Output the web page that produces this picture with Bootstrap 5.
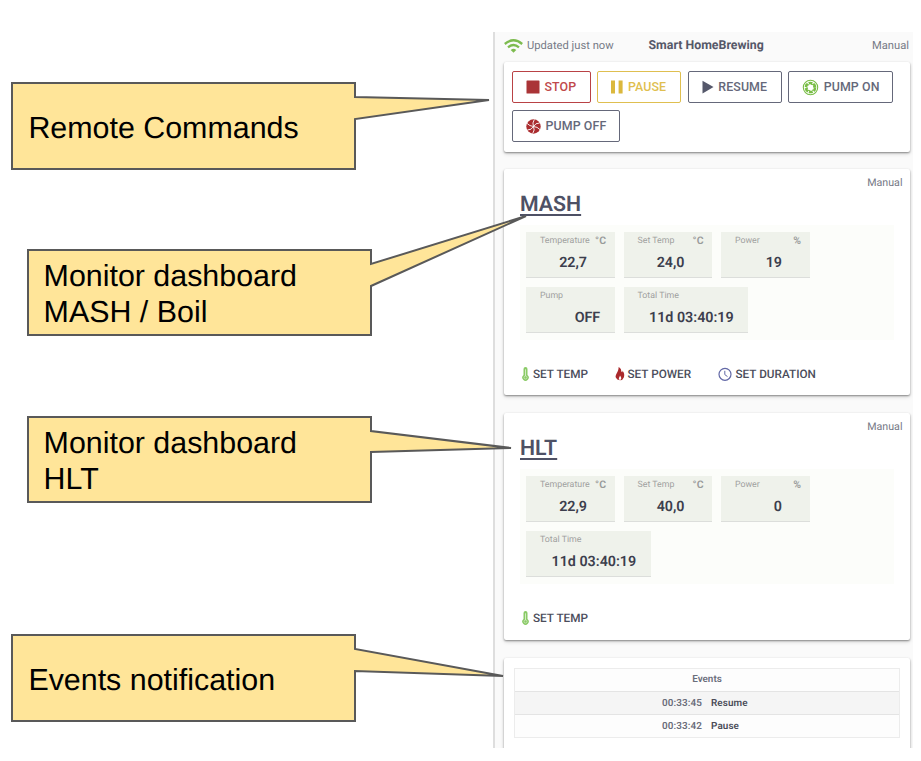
<!DOCTYPE html>
<html lang="en">
<head>
<meta charset="utf-8">
<meta name="viewport" content="width=device-width, initial-scale=1">
<title>Smart HomeBrewing</title>
<link href="https://cdn.jsdelivr.net/npm/bootstrap@5.3.0/dist/css/bootstrap.min.css" rel="stylesheet">
<style>
body{width:921px;height:761px;overflow:hidden;background:#fff;font-family:Roboto,"Liberation Sans",sans-serif;color:#555869;text-rendering:geometricPrecision}
svg{display:block;flex:none}
.notes{width:493px;padding-top:82px}
.callout{position:relative;z-index:2;width:345px;height:88px;margin-left:11px;padding-left:17.4px;font:30.4px/36px "Liberation Sans",Arial,sans-serif;color:#000}
.callout svg{position:absolute;left:0;top:0;overflow:visible;z-index:-1;fill:#ffe599;stroke:#595959;stroke-width:2}
.callout span{padding-top:2px}
.callout .one-line{padding-top:4px}
.callout-in{margin-left:27px;height:87px;padding-left:16.6px}
.gap-a{margin-top:79px}.gap-b{margin-top:80px}.gap-c{margin-top:131px}
.phone{width:420px;height:716px;margin-top:32px;padding:0 3px 0 9px;background:#fafafa;border-left:2px solid #dedede;overflow:hidden}
.topbar{height:30px;font-size:11.2px;line-height:28px;color:#777a87;padding:0 1px 0 0}
.topbar strong{font-size:12.35px;line-height:28px;color:#555869;font-weight:700}
.side-cell{width:144.5px;height:28px}
.panel-card{background:#fff;border-radius:2px;box-shadow:0 1px 2px rgba(0,0,0,.4),0 2px 4px rgba(0,0,0,.13);width:406px}
.commands{height:90px;padding:9px 8px;gap:7px 6.4px;align-content:flex-start}
.cmd{--bs-btn-font-size:12.4px;--bs-btn-line-height:16px;--bs-btn-font-weight:500;--bs-btn-border-radius:2px;--bs-btn-padding-x:13px;--bs-btn-padding-y:0;--bs-btn-color:#65687a;--bs-btn-border-color:#65687a;height:32px;gap:4.5px;white-space:nowrap;letter-spacing:.1px}
.cmd-stop{--bs-btn-color:#c0494b;--bs-btn-border-color:#b94245;width:79px}
.cmd-pause{--bs-btn-color:#dfbf50;--bs-btn-border-color:#dfbf50;width:84px}
.cmd-resume{width:94px}.cmd-on{width:105px}.cmd-off{width:108px}
.vessel{height:226px;margin-top:17px;padding:7px 16px 0}
.vessel.second{margin-top:18px;height:227px}
.mode{font-size:10.7px;line-height:14px;color:#777a87;margin-right:-8.5px}
.vessel h2{font-size:21.3px;line-height:28px;font-weight:600;color:#4e5165;text-decoration:underline;text-decoration-thickness:1.5px;text-underline-offset:2.5px;margin:1px 0 6px}
.tiles{background:#fcfdfa;width:374px;height:115px;padding:7px 6px;gap:9px;align-content:flex-start}
.tile{width:88.5px;height:46px;background:#eff2eb;border-bottom:1px solid #dcdedb;padding:2px 8.5px 0 14px}
.tile.wide{width:124.5px}
.tile-head{font-size:8.8px;line-height:14px;color:#9fa19f;height:15px}
.tile-head b{font-size:10.5px;line-height:13px;font-weight:600;color:#989a9a}
.tile-value{font-size:14.3px;line-height:28px;font-weight:600;color:#3c3e4d;text-align:right;padding-right:5.8px}
.tile-value.mid{padding-right:19px}
.actions{height:20px;margin-top:24px;font-size:11.75px;font-weight:500;line-height:20px;color:#4b4d5b}
.actions span{display:flex;align-items:center;white-space:nowrap}
.act-temp{width:93.5px}.act-power{width:104px}
.events{height:100px;margin-top:18px;padding:10px 11px 0 10px}
.log{width:386px;border:1px solid #ececec;font-size:9.9px;font-weight:600;line-height:22px;color:#6b6e7b;background:#fdfdfd}
.log-row{height:23px;border-top:1px solid #e4e4e4;line-height:24px}
.log-row.alt{background:#f5f5f5}
.log-row time{width:187px;text-align:right;letter-spacing:.1px}
.log-row b{font-weight:600;color:#4a4c58;margin-left:9px;letter-spacing:.1px}
</style>
</head>
<body class="d-flex">
<section class="notes flex-shrink-0">
  <div class="callout d-flex align-items-center"><svg width="345" height="88"><path d="M1 1H344V15L478 18L344 37V87H1Z"/></svg><span class="one-line">Remote Commands</span></div>
  <div class="callout callout-in gap-a d-flex align-items-center"><svg width="345" height="87"><path d="M1 1H344V15L499-33L344 37V86H1Z"/></svg><span>Monitor dashboard<br>MASH / Boil</span></div>
  <div class="callout callout-in gap-b d-flex align-items-center"><svg width="345" height="87"><path d="M1 1H344V15L484 32L344 36V86H1Z"/></svg><span>Monitor dashboard<br>HLT</span></div>
  <div class="callout gap-c d-flex align-items-center"><svg width="345" height="88"><path d="M1 1H344V15L492 42L344 37V87H1Z"/></svg><span class="one-line">Events notification</span></div>
</section>

<main class="phone flex-shrink-0">
  <header class="topbar d-flex">
    <div class="side-cell d-flex align-items-center"><svg class="me-1" width="19" height="14" viewBox="0 0 19 14" fill="none" stroke="#7dbb4f" stroke-width="2.3"><path d="M.8 5Q9.5-2.4 18.2 5M4 8.3Q9.5 3.8 15 8.3"/><path d="M6.7 11Q9.5 8.7 12.3 11L9.5 13.8Z" fill="#7dbb4f" stroke="none"/></svg>Updated just now</div>
    <strong>Smart HomeBrewing</strong>
    <span class="ms-auto">Manual</span>
  </header>

  <section class="panel-card commands d-flex flex-wrap">
    <button class="btn cmd cmd-stop d-flex align-items-center"><svg width="14" height="14" viewBox="0 0 14 14"><rect x=".5" y=".5" width="13" height="13" rx=".6" fill="#aa3437"/></svg>STOP</button>
    <button class="btn cmd cmd-pause d-flex align-items-center"><svg width="12" height="14" viewBox="0 0 12 14" fill="#dbb83d"><path d="M0 .5h4v13H0zM7.6.5h4v13h-4z"/></svg>PAUSE</button>
    <button class="btn cmd cmd-resume d-flex align-items-center"><svg width="12" height="14" viewBox="0 0 12 14"><path d="M.5.7L11.5 7L.5 13.5Z" fill="#55586b"/></svg>RESUME</button>
    <button class="btn cmd cmd-on d-flex align-items-center"><svg width="17" height="17" viewBox="0 0 17 17" fill="none" stroke="#78bd45"><circle cx="8.5" cy="8.5" r="7.2" stroke-width="1.1"/><circle cx="8.5" cy="8.5" r="4.7" stroke-width="2.3" stroke-dasharray="3.9 1.02"/><path d="M8.5 5.2L13.6 6.2M11.4 6.9L13 11.8M11.4 10.2L8 14.1M8.5 11.8L3.4 10.8M5.6 10.2L4 5.2M5.6 6.9L9 3" stroke-width="1"/></svg>PUMP ON</button>
    <button class="btn cmd cmd-off d-flex align-items-center"><svg width="15" height="15" viewBox="0 0 15 15"><circle cx="7.5" cy="7.5" r="7.2" fill="#aa2c2f"/><path d="M7.5 7.5Q6 4 8.3.5M7.5 7.5Q9.5 3.8 13.6 4M7.5 7.5Q11.4 7.7 14 10.6M7.5 7.5Q9.2 11 6.7 14.5M7.5 7.5Q5.4 11.2 1.4 11M7.5 7.5Q3.6 7.2 1 4.4" fill="none" stroke="#fff" stroke-width=".9"/></svg>PUMP OFF</button>
  </section>

  <section class="panel-card vessel">
    <div class="mode text-end">Manual</div>
    <h2>MASH</h2>
    <div class="tiles d-flex flex-wrap">
      <div class="tile"><div class="tile-head d-flex justify-content-between">Temperature<b>°C</b></div><div class="tile-value mid">22,7</div></div>
      <div class="tile"><div class="tile-head d-flex justify-content-between">Set Temp<b>°C</b></div><div class="tile-value mid">24,0</div></div>
      <div class="tile"><div class="tile-head d-flex justify-content-between">Power<b>%</b></div><div class="tile-value mid">19</div></div>
      <div class="tile"><div class="tile-head">Pump</div><div class="tile-value">OFF</div></div>
      <div class="tile wide"><div class="tile-head">Total Time</div><div class="tile-value">11d 03:40:19</div></div>
    </div>
    <div class="actions d-flex">
      <span class="act-temp"><svg width="13" height="16" viewBox="0 0 13 16"><path d="M3.5 9V3a2 2 0 0 1 4 0V9a3.2 3.2 0 1 1-4 0Z" fill="#8aca66"/><path d="M5.5 3.3V10" stroke="#e5f4dc" stroke-width=".8"/><circle cx="5.5" cy="11.5" r="1.5" fill="none" stroke="#dff0d5" stroke-width=".6"/></svg>SET TEMP</span>
      <span class="act-power"><svg width="14" height="16" viewBox="0 0 14 16"><path d="M4.6 1C8 2.8 6.6 5 8 6.3C8.7 5.8 8.4 5 8.3 4.5C10.5 6.7 10.6 9.4 9.8 11.5Q8.9 14.2 6 14.2Q2.8 14.2 1.8 11.6C.7 8.7 4.9 5.8 4.6 1Z" fill="#aa292c"/><path d="M6 9.4C7.2 10.9 7.8 12.6 6.7 13.7H5.2C4.1 12.4 5.6 11.3 6 9.4Z" fill="#fff"/></svg>SET POWER</span>
      <span class="act-time"><svg width="18" height="16" viewBox="0 0 18 16" fill="none" stroke="#6268a6"><circle cx="7" cy="8.3" r="6" stroke-width="1.2"/><path d="M6.8 4.8V8.6L9.5 10.6"/></svg>SET DURATION</span>
    </div>
  </section>

  <section class="panel-card vessel second">
    <div class="mode text-end">Manual</div>
    <h2>HLT</h2>
    <div class="tiles d-flex flex-wrap">
      <div class="tile"><div class="tile-head d-flex justify-content-between">Temperature<b>°C</b></div><div class="tile-value mid">22,9</div></div>
      <div class="tile"><div class="tile-head d-flex justify-content-between">Set Temp<b>°C</b></div><div class="tile-value mid">40,0</div></div>
      <div class="tile"><div class="tile-head d-flex justify-content-between">Power<b>%</b></div><div class="tile-value mid">0</div></div>
      <div class="tile wide"><div class="tile-head">Total Time</div><div class="tile-value">11d 03:40:19</div></div>
    </div>
    <div class="actions d-flex">
      <span><svg width="13" height="16" viewBox="0 0 13 16"><path d="M3.5 9V3a2 2 0 0 1 4 0V9a3.2 3.2 0 1 1-4 0Z" fill="#8aca66"/><path d="M5.5 3.3V10" stroke="#e5f4dc" stroke-width=".8"/><circle cx="5.5" cy="11.5" r="1.5" fill="none" stroke="#dff0d5" stroke-width=".6"/></svg>SET TEMP</span>
    </div>
  </section>

  <section class="panel-card events">
    <div class="log">
      <div class="text-center">Events</div>
      <div class="log-row alt d-flex"><time>00:33:45</time><b>Resume</b></div>
      <div class="log-row d-flex"><time>00:33:42</time><b>Pause</b></div>
    </div>
  </section>
</main>
<script src="https://cdn.jsdelivr.net/npm/bootstrap@5.3.0/dist/js/bootstrap.bundle.min.js"></script>
</body>
</html>
